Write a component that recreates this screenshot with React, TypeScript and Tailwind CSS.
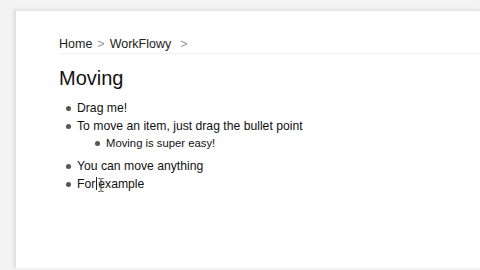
import React from "react";

type Item = { text: string; children?: Item[] };

const items: Item[] = [
  { text: "Drag me!" },
  {
    text: "To move an item, just drag the bullet point",
    children: [{ text: "Moving is super easy!" }],
  },
  { text: "You can move anything" },
  { text: "For example" },
];

function Bullet() {
  return (
    <span className="flex w-[11px] shrink-0 items-center">
      <span className="h-[5px] w-[5px] rounded-full bg-[#555]" />
    </span>
  );
}

// mouse I-beam hovering over the caret
function IBeam() {
  return (
    <svg className="absolute left-[21px] top-[3px]" width="6" height="14" viewBox="0 0 6 14">
      <path d="M0.5 0.5h2m1 0h2M3 1v12M0.5 13.5h2m1 0h2M1.5 7h3" stroke="#444" strokeWidth="1" fill="none" />
    </svg>
  );
}

export default function App() {
  return (
    <div className="h-[270px] w-[480px] overflow-hidden bg-[#f3f3f3] pl-[14px] pt-[10px] font-['Liberation_Sans',Arial,sans-serif]">
      <div className="h-[258px] border-l-2 border-t border-[#e2e2e2] bg-white pl-[43px] shadow-[-1px_-1px_3px_rgba(0,0,0,0.06)]">
        <div className="flex border-b border-[#f0f0f0] pb-[2px] pt-[26px] text-[12.5px] leading-[14px] text-[#222]">
          <span>Home</span>
          <span className="mx-[5px] text-[#999]">&gt;</span>
          <span>WorkFlowy</span>
          <span className="ml-[9px] text-[#999]">&gt;</span>
        </div>
        <h1 className="mt-[12px] text-[20px] leading-[24px] text-[#111]">Moving</h1>
        <ul className="mt-[9px] text-[12.2px] text-[#111]">
          {items.map((it) => (
            <li key={it.text} className={it.children ? "mb-[6px]" : ""}>
              <div className="flex h-[18px] items-center pl-[7px]">
                <Bullet />
                <span className="relative">
                  {it.text === "For example" ? (
                    <>
                      For
                      <span className="mx-[1px] inline-block h-[13px] w-px translate-y-[2px] bg-[#222]" />
                      example
                      <IBeam />
                    </>
                  ) : (
                    it.text
                  )}
                </span>
              </div>
              {it.children?.map((c) => (
                <div key={c.text} className="flex h-[16px] items-center pl-[36px] text-[11.3px]">
                  <Bullet />
                  <span>{c.text}</span>
                </div>
              ))}
            </li>
          ))}
        </ul>
      </div>
    </div>
  );
}
